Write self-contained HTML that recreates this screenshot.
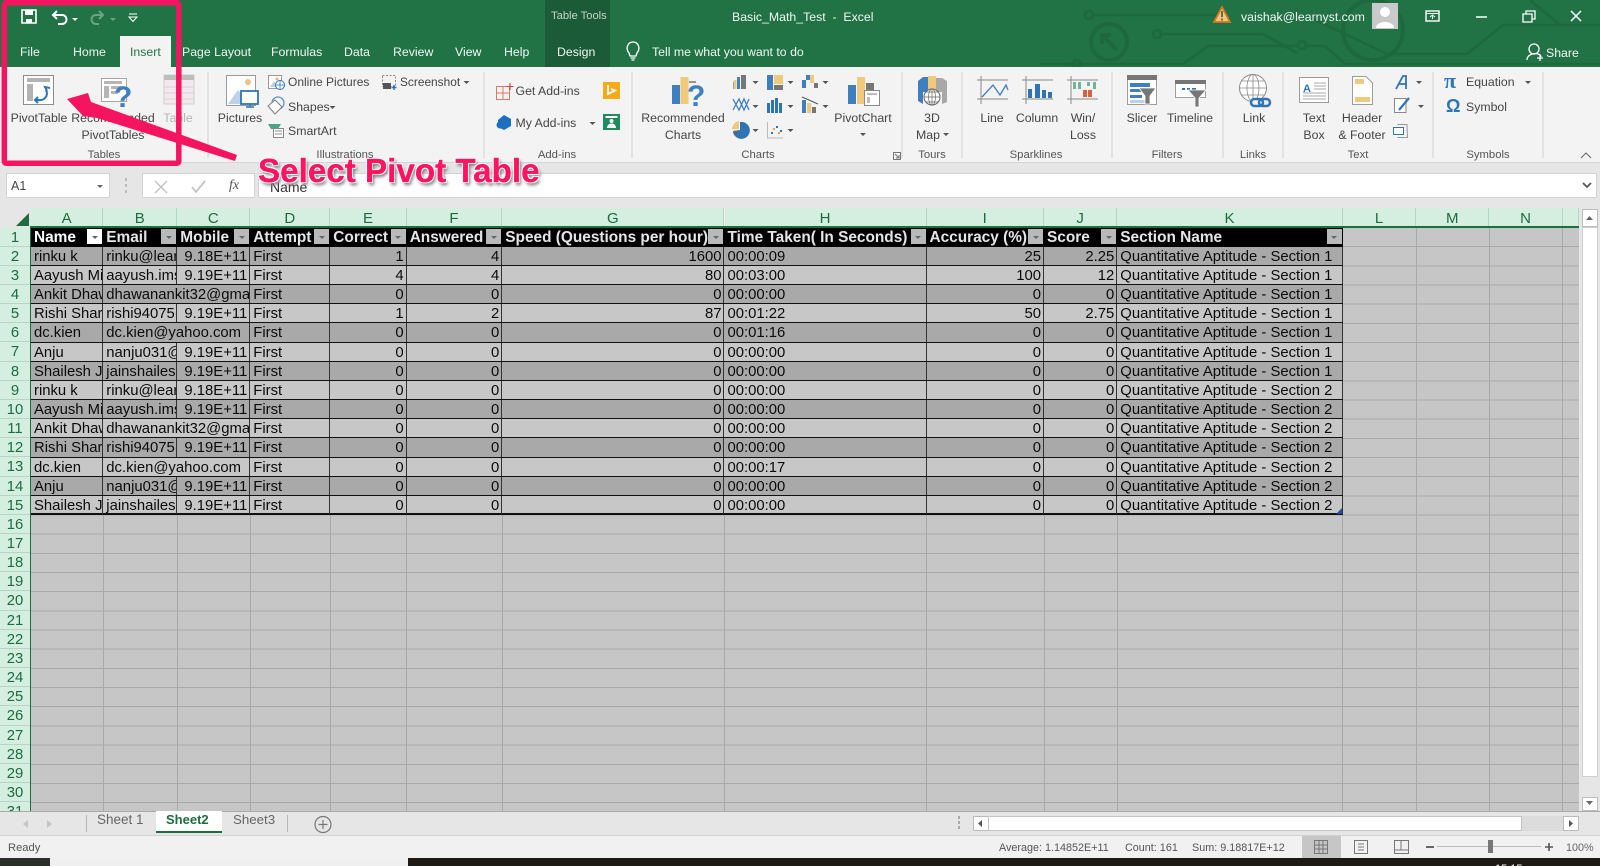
<!DOCTYPE html>
<html lang="en"><head><meta charset="utf-8"><title>Basic_Math_Test - Excel</title>
<style>
*{margin:0;padding:0;box-sizing:border-box}
html,body{width:1600px;height:866px;overflow:hidden;background:#f1f1f1}
body{position:relative;font-family:"Liberation Sans",Arial,sans-serif}
.b{position:absolute}
.t{position:absolute;white-space:nowrap;font-size:12.3px;line-height:16px;color:#444}
.c{transform:translateX(-50%)}
.w{color:#f2f7f4}
.g{color:#555}
.r{position:absolute;left:31px;width:1312px;height:19.17px;border-bottom:1px solid #111;font-size:14.85px;color:#0a0a0a}
.r i{position:absolute;top:0;height:18.17px;line-height:20.4px;font-style:normal;padding:0 2px 0 3px;overflow:hidden;white-space:nowrap;border-right:1px solid #333}
.d{background:#a9a9a9}.l{background:#c7c7c7}
.a{left:0;width:72.3px}.e2{left:72.3px;width:74px}.m{left:146.3px;width:73px;text-align:right}
.e3{left:72.3px;width:147px}.at{left:219.3px;width:80px}
.n1{left:299.3px;width:76.4px;text-align:right}.n2{left:375.7px;width:95.6px;text-align:right}
.n3{left:471.3px;width:222.2px;text-align:right}.ti{left:693.5px;width:202px}
.n4{left:895.5px;width:117.5px;text-align:right}.n5{left:1013px;width:73.3px;text-align:right}
.k{left:1086.3px;width:225.4px}
.h{background:#000;border-bottom:0}
.h i{color:#e6e6e6;font-weight:bold;font-size:15.4px;border-right:0;height:19px;line-height:20.4px}
.h u{position:absolute;right:1px;top:1.5px;width:15px;height:15px;background:#b9b9b9;display:block}
.h u:after{content:"";position:absolute;left:4.5px;top:6.5px;border:3px solid transparent;border-top:3px solid #666;border-bottom:0}
.col{position:absolute;top:208px;height:19px;line-height:21px;text-align:center;font-size:15px;color:#1c6c40;background:#d4efdf;border-right:1px solid #b4d6c2;overflow:hidden}
#rows{position:absolute;left:0;top:227.5px;width:30px;height:583.5px;overflow:hidden;background:#d4efdf}
#rows div{height:19.17px;line-height:21.4px;text-align:center;font-size:14.85px;color:#1c6c40;border-bottom:1px solid #b4d6c2}
</style></head><body>

<!-- title / tab band -->
<div class="b" style="left:0;top:0;width:1600px;height:67px;background:#217346"></div>
<div class="b" style="left:545px;top:0;width:65px;height:67px;background:#1b5b38"></div>
<svg class="b" style="left:0;top:0" width="1600" height="67" fill="none" stroke="#1d683e" stroke-width="2.6">
<circle cx="1089" cy="15" r="4"/><path d="M1093 15H1218"/>
<circle cx="1109" cy="42" r="18" stroke-width="4"/><path d="M1117 50L1102 35M1102 44V35H1111" stroke-width="4"/>
<circle cx="1157" cy="34" r="4"/><path d="M1161 34H1263L1297 53"/>
<path d="M1040 64H1183L1208 46H1298M1307 46H1325L1345 64H1600"/><circle cx="1302" cy="45" r="4"/>
<circle cx="1077" cy="64" r="4"/>
<circle cx="1373" cy="30" r="30" stroke-width="4"/>
<path d="M1305 15L1387 54H1467L1503 25H1600"/><path d="M1530 0L1560 25" />
</svg>

<!-- QAT -->
<svg class="b" style="left:0;top:0" width="160" height="34" fill="none">
<path d="M22 10H36V23H22Z" stroke="#fff" stroke-width="1.6"/><path d="M25 10H33V15H25Z" fill="#fff"/><path d="M26 19H32V23H26Z" fill="#fff"/>
<path d="M53 15H62C68 15 68 24 62 24H58M57 11L53 15L57 19" stroke="#fff" stroke-width="2"/><path d="M72 18h6l-3 3z" fill="#fff"/>
<path d="M103 15H96C90 15 90 24 96 24H99M99 11L103 15L99 19" stroke="#6da385" stroke-width="2"/><path d="M110 18h6l-3 3z" fill="#6da385"/>
<path d="M129 17h8l-4 4.500z" stroke="#fff" stroke-width="1"/><path d="M129 14H137" stroke="#fff"/>
</svg>

<!-- right controls -->
<svg class="b" style="left:1200px;top:0" width="400" height="67" fill="none">
<path d="M22 7L30 22H14Z" fill="#f4c77b" stroke="#d9751d" stroke-width="1.8"/><path d="M22 11V17M22 18.500V20.500" stroke="#444" stroke-width="1.500"/>
<rect x="172" y="3" width="26" height="26" fill="#c9c9c9"/><circle cx="185" cy="12" r="5" fill="#fff"/><path d="M176 28C176 20 194 20 194 28Z" fill="#fff"/>
<rect x="226" y="11" width="13" height="10" stroke="#fff" stroke-width="1.400"/><path d="M226 13.500H239M232.500 19V15M230 17L232.500 15L235 17" stroke="#fff"/>
<path d="M276 17H287" stroke="#fff" stroke-width="1.500"/>
<path d="M323 14H332V22H323ZM326 14V11H335V19H332" stroke="#fff" stroke-width="1.300"/>
<path d="M371 11L381 21M381 11L371 21" stroke="#fff" stroke-width="1.500"/>
<circle cx="334" cy="49" r="5" stroke="#fff" stroke-width="1.300"/><path d="M327 60C327 52 341 52 341 57M340 55V61M337 58H343" stroke="#fff" stroke-width="1.300"/>
</svg>
<div class="t w" style="left:551px;top:8px;font-size:11.2px;color:#c0d5c8">Table Tools</div>
<div class="t w" style="left:732px;top:9px">Basic_Math_Test &nbsp;-&nbsp; Excel</div>
<div class="t w" style="left:1241px;top:9px">vaishak@learnyst.com</div>
<div class="t w" style="left:20px;top:43.500px">File</div>
<div class="t w" style="left:73px;top:43.500px">Home</div>
<div class="b" style="left:120px;top:36px;width:51px;height:32px;background:#f3f3f3"></div>
<div class="t" style="left:130px;top:43.500px;color:#217346">Insert</div>
<div class="t w" style="left:182px;top:43.500px">Page Layout</div>
<div class="t w" style="left:271px;top:43.500px">Formulas</div>
<div class="t w" style="left:344px;top:43.500px">Data</div>
<div class="t w" style="left:393px;top:43.500px">Review</div>
<div class="t w" style="left:455px;top:43.500px">View</div>
<div class="t w" style="left:504px;top:43.500px">Help</div>
<div class="t w" style="left:557px;top:43.500px">Design</div>
<svg class="b" style="left:624px;top:40px" width="20" height="22" fill="none" stroke="#fff" stroke-width="1.300"><path d="M5 13C1 8 4 2 9 2C14 2 17 8 13 13L12 16H6Z"/><path d="M6.500 18H11.500M7.500 20H10.500"/></svg>
<div class="t w" style="left:652px;top:43.500px">Tell me what you want to do</div>
<div class="t w" style="left:1546px;top:45px">Share</div>

<!-- ribbon -->
<div class="b" style="left:0;top:67px;width:1600px;height:96px;background:#f3f3f3;border-bottom:1px solid #d6d6d6"></div>
<div class="b" style="left:120px;top:66px;width:51px;height:3px;background:#f3f3f3"></div>
<svg class="b" style="left:0;top:67px" width="1600" height="96" viewBox="0 67 1600 96" fill="none">
<path d="M208 72V158M484 72V158M632 72V158M902 72V158M962 72V158M1112 72V158M1223 72V158M1283 72V158M1433 72V158M1543 72V158" stroke="#d2d2d2"/>
<!-- PivotTable -->
<rect x="23.500" y="75.500" width="30" height="29" fill="#fff" stroke="#8d8d8d"/><path d="M27 78H50V82H27ZM27 84H33V101H27Z" fill="#b3b3b3"/>
<path d="M46 90C49 96 44 101 38 100M40 100H35M38 97L35 100L38 103M47 91L45 87L50 88" stroke="#2f75b5" stroke-width="2"/>
<!-- Recommended -->
<rect x="101.500" y="78.500" width="25" height="23" fill="#fff" stroke="#a5a5a5"/><path d="M104 81H122V84H104ZM104 86H109V98H104ZM111 86H122V89H111ZM111 91H118V94H111Z" fill="#b5b5b5"/>
<!-- Table -->
<path d="M164 75H194V104H164Z" fill="#f2e8ee" stroke="#cfcfcf"/><path d="M164 75H194V80H164Z" fill="#bdbdbd"/><path d="M179 75V104M164 87H194M164 93H194M164 99H194" stroke="#d9d0d5"/>
<!-- Pictures -->
<rect x="226.500" y="75.500" width="29" height="30" fill="#fff" stroke="#9a9a9a"/><circle cx="248" cy="82" r="3" fill="#f1c27d"/><path d="M228 104L238 90L246 100V104Z" fill="#bcd2e8"/>
<rect x="241" y="91" width="17" height="13" fill="#fff" stroke="#2f75b5" stroke-width="1.800"/><path d="M246 107H254M250 104V107" stroke="#2f75b5" stroke-width="1.400"/>
<!-- small illustration icons -->
<rect x="268.500" y="75.500" width="13" height="13" fill="#fff" stroke="#999"/><circle cx="277" cy="79" r="1.500" fill="#ecb566"/><path d="M270 87L274 81L278 87Z" fill="#bcd2e8"/><circle cx="280" cy="85" r="4.500" fill="#fff" stroke="#2f75b5"/><path d="M275.500 85H284.500M280 80.500V89.500" stroke="#2f75b5" stroke-width=".8"/>
<circle cx="278" cy="103" r="6" stroke="#5b93cc" stroke-width="1.300"/><path d="M268 106L275 100L282 107L275 114Z" fill="#fff" stroke="#7d7d7d"/>
<path d="M268 124H281L278 129H271Z" fill="#4ea287"/><rect x="273.500" y="128.500" width="10" height="9" fill="#fff" stroke="#888"/><path d="M275 131H282M275 134H282" stroke="#888"/>
<rect x="382.500" y="75.500" width="13" height="11" stroke="#888" stroke-dasharray="2 1.500"/><rect x="383" y="83" width="8" height="6" fill="#555"/><path d="M394 85V90M391.500 87.500H396.500" stroke="#2f75b5" stroke-width="1.500"/>
<path d="M329.500 106h6l-3 3zM463.500 81h6l-3 3zM589.500 122h6l-3 3z" fill="#555"/>
<!-- addins -->
<path d="M496.500 86.500H509.500V99.500H496.500ZM496.500 93H509.500M503 86.500V99.500" stroke="#d97a6c"/><path d="M510 83V90M506.500 86.500H513.500" stroke="#d6453a" stroke-width="1.100"/>
<path d="M504 115L511 119V126L504 130L498 127V120Z" fill="#1f6fc0"/><circle cx="500" cy="125" r="3.500" fill="#1f6fc0"/>
<rect x="603" y="82" width="17" height="17" fill="#f5ab17"/><path d="M608 85V94L615 90.500L611 89" stroke="#fff" stroke-width="1.800"/>
<rect x="603" y="114" width="17" height="16" fill="#1f8a5b"/><rect x="605.500" y="116" width="12" height="2" fill="#fff"/><circle cx="611.500" cy="121" r="2" fill="#fff"/><path d="M607 128C607 122 616 122 616 128Z" fill="#fff"/>
<!-- rec charts -->
<rect x="672" y="85" width="8" height="19" fill="#3f7fbf"/><rect x="680.500" y="77" width="8" height="27" fill="#f0c97a"/><path d="M689 82H696" stroke="#777" stroke-width="1.500"/>
<!-- chart grid -->
<path d="M733 82h3v7h-3zM737 77h3v12h-3z" fill="#3f7fbf"/><path d="M733.500 80h3v9h-3z" fill="#f0c97a"/><rect x="741" y="75" width="5" height="14" fill="#777"/>
<path d="M767 75H773V90H767Z" fill="#3f7fbf"/><path d="M774 75H783V84H774Z" fill="#f0c97a"/><path d="M774 85H783V90H774Z" fill="#777"/>
<path d="M802 80H806V88H802Z" fill="#3f7fbf"/><path d="M806 75H810V80H806Z" fill="#3f7fbf"/><path d="M810 75H814V83H810Z" fill="#f0c97a"/><path d="M814 83H818V88H814Z" fill="#777"/>
<path d="M733 99L739 110L744 99L749 110M733 110L739 99L744 110L749 99" stroke="#3f7fbf" stroke-width="1.300"/>
<path d="M767 103h3v10h-3zM771 100h3v13h-3zM775 98h3v15h-3zM779 103h3v10h-3z" fill="#2f75b5"/>
<path d="M802 100h4v13h-4z" fill="#3f7fbf"/><path d="M807 103h4v10h-4z" fill="#f0c97a"/><path d="M812 107h4v6h-4z" fill="#777"/><path d="M802 97L818 104" stroke="#555"/>
<path d="M740 122A8.500 8.500 0 1 1 733 132L740 130Z" fill="#2f75b5"/><path d="M732 129A8.500 8.500 0 0 1 739 121V129Z" fill="#f0c97a"/><path d="M733 131L740 130L734 135Z" fill="#666"/>
<path d="M767.500 122V138H783" stroke="#bbb"/><path d="M771 132h2v2h-2zM776 126h2v2h-2zM780 130h2v2h-2z" fill="#2f75b5"/><path d="M773 128h2v2h-2zM778 132h2v2h-2z" fill="#e0a840"/>
<path d="M752.500 81h6l-3 3zM787.500 81h6l-3 3zM822.500 81h6l-3 3zM752.500 105h6l-3 3zM787.500 105h6l-3 3zM822.500 105h6l-3 3zM752.500 129h6l-3 3zM787.500 129h6l-3 3zM860 133h6l-3 3zM943 133h6l-3 3z" fill="#555"/>
<!-- PivotChart -->
<rect x="848" y="85" width="8" height="19" fill="#3f7fbf"/><rect x="857" y="77" width="8" height="27" fill="#f0c97a"/><rect x="866" y="83" width="8" height="10" fill="#777"/><rect x="864.500" y="90.500" width="15" height="15" fill="#fff" stroke="#8a8a8a"/><path d="M867 93H877V95H867ZM867 97H870V103H867Z" fill="#bbb"/>
<!-- 3D Map -->
<path d="M918 81L923 77V104L918 101Z" fill="#3f7fbf"/><path d="M923 77H930V92H923V104Z" fill="#3f7fbf"/><path d="M928 76H936V92H928Z" fill="#f0c97a"/><path d="M936 78H942L947 81V102L942 104V92H936Z" fill="#a8a8a8"/>
<circle cx="932" cy="97" r="8" fill="#fff" stroke="#666"/><path d="M924 97H940M932 89V105M926 92H938M926 102H938" stroke="#666" stroke-width=".7"/><ellipse cx="932" cy="97" rx="3.500" ry="8" stroke="#666" stroke-width=".7"/>
<!-- Sparklines -->
<path d="M977 80H1008M977 99H1008M981 76V104M1022 80H1053M1022 99H1053M1026 76V104M1067 80H1098M1067 99H1098M1071 76V104" stroke="#8a8a8a"/>
<path d="M982 97L993 85L1000 95L1006 85L1008 90" stroke="#3f7fbf" stroke-width="1.300"/>
<path d="M1028 89h4v9h-4zM1035 84h5v14h-5zM1042 90h4v8h-4zM1048 92h4v6h-4z" fill="#2f75b5"/>
<path d="M1073 82h3v7h-3zM1078 82h3v7h-3zM1087 82h3v4h-3zM1093 82h3v7h-3z" fill="#74b39a"/><path d="M1083 90h4v7h-4zM1088 90h4v7h-4z" fill="#d9603c"/>
<!-- Slicer -->
<rect x="1127.500" y="75.500" width="29" height="29" fill="#fff" stroke="#9c9c9c"/><path d="M1127 75H1157V80H1127Z" fill="#777"/><path d="M1130 83H1150V87H1130ZM1130 89H1146V92H1130Z" fill="#3f7fbf"/><path d="M1130 95H1142V98H1130Z" fill="#3f7fbf"/><path d="M1130 100H1150V103H1130Z" fill="#bcd2e8"/><path d="M1139 88H1156L1150 96V104H1145V96Z" fill="#777" stroke="#fff" stroke-width=".8"/>
<!-- Timeline -->
<rect x="1175.500" y="80.500" width="30" height="17" fill="#fff" stroke="#9c9c9c"/><path d="M1175 80H1206V84H1175Z" fill="#777"/><path d="M1182 88h3v2h-3zM1187 88h3v2h-3zM1192 88h4v2h-4z" fill="#2f75b5"/><path d="M1188 90H1206L1199 98V107H1195V98Z" fill="#777" stroke="#fff" stroke-width=".8"/>
<!-- Link -->
<circle cx="1253" cy="88" r="13.500" fill="#fff" stroke="#8a8a8a"/><path d="M1239.500 88H1266.500M1253 74.500V101.500M1242 81H1264M1242 95H1264" stroke="#8a8a8a" stroke-width=".8"/><ellipse cx="1253" cy="88" rx="6" ry="13.500" stroke="#8a8a8a" stroke-width=".8"/>
<rect x="1251" y="99" width="12" height="7" rx="3.500" stroke="#2f75b5" stroke-width="2.500" fill="#f3f3f3"/><rect x="1259" y="99" width="11" height="7" rx="3.500" stroke="#2f75b5" stroke-width="2.500"/>
<!-- Text box -->
<rect x="1299.500" y="77.500" width="29" height="25" fill="#fff" stroke="#9c9c9c"/><path d="M1314 83H1326M1314 86H1326M1314 89H1326M1303 93H1326M1303 96H1326M1303 99H1326" stroke="#aaa"/>
<!-- Header -->
<path d="M1352.500 76.500H1366L1372.500 83V104.500H1352.500Z" fill="#fff" stroke="#9c9c9c"/><path d="M1355 79H1364V84H1355ZM1355 97H1370V102H1355Z" fill="#f0c97a"/>
<!-- text small -->
<path d="M1396 89L1403 76H1406L1406 89M1398 84H1407" stroke="#2f75b5" stroke-width="1.800"/><path d="M1416 81h6l-3 3z" fill="#555"/>
<path d="M1394.500 98.500H1406V112.500H1394.500Z" fill="#fff" stroke="#888"/><path d="M1399 110L1409 98" stroke="#2f75b5" stroke-width="2.200"/><path d="M1418 105h6l-3 3z" fill="#555"/>
<path d="M1397.500 124.500H1407L1407.500 137.500H1397.500" stroke="#999"/><rect x="1393.500" y="127.500" width="10" height="7" fill="#fff" stroke="#2f75b5"/>
<path d="M1525 81h6l-3 3z" fill="#555"/>
<path d="M1581 158L1586 153L1591 158" stroke="#666"/>
</svg>
<div class="t" style="left:114px;top:84.500px;font-size:30px;line-height:26px;font-weight:bold;color:#3f7fbf">?</div>
<div class="t" style="left:687px;top:83.500px;font-size:30px;line-height:26px;font-weight:bold;color:#3f7fbf">?</div>
<div class="t" style="left:1303px;top:81px;font-size:11px;font-weight:bold;color:#2f75b5">A</div>
<div class="t" style="left:1444px;top:70px;font-size:22px;line-height:22px;font-weight:bold;color:#2f75b5;font-family:'Liberation Serif',serif">π</div>
<div class="t" style="left:1446px;top:95px;font-size:18px;line-height:22px;font-weight:bold;color:#2f75b5">Ω</div>
<div class="t c" style="left:39px;top:109.500px">PivotTable</div>
<div class="t c" style="left:113px;top:109.500px">Recommended</div>
<div class="t c" style="left:113px;top:126.500px">PivotTables</div>
<div class="t c" style="left:178px;top:109.500px;color:#b5b5b5">Table</div>
<div class="t c" style="left:240px;top:109.500px">Pictures</div>
<div class="t" style="left:288px;top:74px;font-size:12px">Online Pictures</div>
<div class="t" style="left:288px;top:98.500px">Shapes</div>
<div class="t" style="left:288px;top:122.500px">SmartArt</div>
<div class="t" style="left:400px;top:74px;font-size:11.900px">Screenshot</div>
<div class="t" style="left:515.500px;top:82.500px">Get Add-ins</div>
<div class="t" style="left:515.500px;top:115px">My Add-ins</div>
<div class="t c" style="left:683px;top:109.500px">Recommended</div>
<div class="t c" style="left:683px;top:126.500px">Charts</div>
<div class="t c" style="left:863px;top:109.500px">PivotChart</div>
<div class="t c" style="left:932px;top:109.500px">3D</div>
<div class="t c" style="left:928px;top:126.500px">Map</div>
<div class="t c" style="left:992px;top:109.500px">Line</div>
<div class="t c" style="left:1037px;top:109.500px">Column</div>
<div class="t c" style="left:1083px;top:109.500px">Win/</div>
<div class="t c" style="left:1083px;top:126.500px">Loss</div>
<div class="t c" style="left:1142px;top:109.500px">Slicer</div>
<div class="t c" style="left:1190px;top:109.500px">Timeline</div>
<div class="t c" style="left:1254px;top:109.500px">Link</div>
<div class="t c" style="left:1314px;top:109.500px">Text</div>
<div class="t c" style="left:1314px;top:126.500px">Box</div>
<div class="t c" style="left:1362px;top:109.500px">Header</div>
<div class="t c" style="left:1362px;top:126.500px">&amp; Footer</div>
<div class="t" style="left:1466px;top:74px">Equation</div>
<div class="t" style="left:1466px;top:98.500px">Symbol</div>
<div class="t c g" style="left:104px;top:146.500px;font-size:11.300px">Tables</div>
<div class="t c g" style="left:345px;top:146.500px;font-size:11.300px">Illustrations</div>
<div class="t c g" style="left:557px;top:146.500px;font-size:11.300px">Add-ins</div>
<div class="t c g" style="left:758px;top:146.500px;font-size:11.300px">Charts</div>
<div class="t c g" style="left:932px;top:146.500px;font-size:11.300px">Tours</div>
<div class="t c g" style="left:1036px;top:146.500px;font-size:11.300px">Sparklines</div>
<div class="t c g" style="left:1167px;top:146.500px;font-size:11.300px">Filters</div>
<div class="t c g" style="left:1253px;top:146.500px;font-size:11.300px">Links</div>
<div class="t c g" style="left:1358px;top:146.500px;font-size:11.300px">Text</div>
<div class="t c g" style="left:1488px;top:146.500px;font-size:11.300px">Symbols</div>
<svg class="b" style="left:892px;top:151px" width="10" height="10" fill="none" stroke="#777"><path d="M1 1.500H8.500V8.500H1.500V1M3 3L7 7M7 4V7H4"/></svg>

<!-- formula band -->
<div class="b" style="left:0;top:163px;width:1600px;height:45px;background:#e6e6e6"></div>
<div class="b" style="left:6px;top:173px;width:104px;height:25px;background:#fff;border:1px solid #d4d4d4"></div>
<div class="t" style="left:11px;top:178px;font-size:12.500px">A1</div>
<div class="b" style="left:142px;top:173px;width:113px;height:25px;background:#fff;border:1px solid #d4d4d4"></div>
<div class="b" style="left:258px;top:173px;width:1339px;height:25px;background:#fff;border:1px solid #d4d4d4"></div>
<svg class="b" style="left:0;top:170px" width="260" height="30" fill="none">
<path d="M97 15h6l-3 3z" fill="#666"/><path d="M126 8v3M126 14v3M126 20v3" stroke="#bbb" stroke-width="2"/>
<path d="M155 11L167 23M167 11L155 23" stroke="#c4c4c4" stroke-width="1.500"/><path d="M192 17L196 22L205 11" stroke="#c4c4c4" stroke-width="1.800"/>
</svg>
<div class="t" style="left:229px;top:178px;font-family:'Liberation Serif',serif;font-style:italic;font-size:14px;color:#555">fx</div>
<div class="t" style="left:270px;top:179px;font-size:14px;color:#333">Name</div>
<svg class="b" style="left:1580px;top:178px" width="14" height="14" fill="none"><path d="M3 5L7 9L11 5" stroke="#555" stroke-width="1.800"/></svg>

<!-- column headings -->
<div class="b" style="left:0;top:208px;width:31px;height:20px;background:#e6e6e6"></div>
<svg class="b" style="left:15px;top:213px" width="14" height="14"><path d="M14 0V13H1Z" fill="#1c6c40"/></svg>
<div class="col" style="left:31px;width:72.300px">A</div>
<div class="col" style="left:103.300px;width:74px">B</div>
<div class="col" style="left:177.300px;width:73px">C</div>
<div class="col" style="left:250.300px;width:80px">D</div>
<div class="col" style="left:330.300px;width:76.400px">E</div>
<div class="col" style="left:406.700px;width:95.600px">F</div>
<div class="col" style="left:502.300px;width:222.200px">G</div>
<div class="col" style="left:724.500px;width:202px">H</div>
<div class="col" style="left:926.500px;width:117.500px">I</div>
<div class="col" style="left:1044px;width:73.300px">J</div>
<div class="col" style="left:1117.300px;width:225.400px">K</div>
<div class="col" style="left:1342.700px;width:73.600px">L</div>
<div class="col" style="left:1416.300px;width:73px">M</div>
<div class="col" style="left:1489.300px;width:73.400px">N</div>
<div class="col" style="left:1562.700px;width:16px"></div>
<div class="b" style="left:30px;top:226px;width:1549px;height:2px;background:#1a6f3f"></div>

<!-- grid -->
<div class="b" style="left:31px;top:227.500px;width:1548px;height:583.500px;background:repeating-linear-gradient(to bottom,#c6c6c6 0,#c6c6c6 18.170px,#a9a9a9 18.170px,#a9a9a9 19.170px)"></div>
<svg class="b" style="left:0;top:228px" width="1580" height="583" stroke="#a9a9a9"><path d="M103.500 0V583M177.500 0V583M250.500 0V583M330.500 0V583M406.500 0V583M502.500 0V583M724.500 0V583M926.500 0V583M1044.500 0V583M1117.500 0V583M1342.500 0V583M1416.500 0V583M1489.500 0V583M1562.500 0V583"/></svg>

<div id="rows"><div>1</div><div>2</div><div>3</div><div>4</div><div>5</div><div>6</div><div>7</div><div>8</div><div>9</div><div>10</div><div>11</div><div>12</div><div>13</div><div>14</div><div>15</div><div>16</div><div>17</div><div>18</div><div>19</div><div>20</div><div>21</div><div>22</div><div>23</div><div>24</div><div>25</div><div>26</div><div>27</div><div>28</div><div>29</div><div>30</div><div>31</div></div>
<div class="b" style="left:29.500px;top:227px;width:1.500px;height:584px;background:#1a6f3f"></div>

<div class="r h" style="top:227.500px">
<i class="a" style="color:#fff">Name<u style="background:#fff"></u></i><i class="e2">Email<u></u></i><i class="m" style="text-align:left">Mobile<u></u></i><i class="at">Attempt<u></u></i><i class="n1" style="text-align:left">Correct<u></u></i><i class="n2" style="text-align:left">Answered<u></u></i><i class="n3" style="text-align:left">Speed (Questions per hour)<u></u></i><i class="ti">Time Taken( In Seconds)<u></u></i><i class="n4" style="text-align:left">Accuracy (%)<u></u></i><i class="n5" style="text-align:left">Score<u></u></i><i class="k">Section Name<u></u></i>
</div>
<div class="r d" style="top:246.670px"><i class="a">rinku k</i><i class="e2">rinku@learnyst</i><i class="m">9.18E+11</i><i class="at">First</i><i class="n1">1</i><i class="n2">4</i><i class="n3">1600</i><i class="ti">00:00:09</i><i class="n4">25</i><i class="n5">2.25</i><i class="k">Quantitative Aptitude - Section 1</i></div>
<div class="r l" style="top:265.840px"><i class="a">Aayush Mishra</i><i class="e2">aayush.ims@gmail</i><i class="m">9.19E+11</i><i class="at">First</i><i class="n1">4</i><i class="n2">4</i><i class="n3">80</i><i class="ti">00:03:00</i><i class="n4">100</i><i class="n5">12</i><i class="k">Quantitative Aptitude - Section 1</i></div>
<div class="r d" style="top:285.010px"><i class="a">Ankit Dhawan</i><i class="e3">dhawanankit32@gmail.com</i><i class="at">First</i><i class="n1">0</i><i class="n2">0</i><i class="n3">0</i><i class="ti">00:00:00</i><i class="n4">0</i><i class="n5">0</i><i class="k">Quantitative Aptitude - Section 1</i></div>
<div class="r l" style="top:304.180px"><i class="a">Rishi Sharma</i><i class="e2">rishi94075@gmail</i><i class="m">9.19E+11</i><i class="at">First</i><i class="n1">1</i><i class="n2">2</i><i class="n3">87</i><i class="ti">00:01:22</i><i class="n4">50</i><i class="n5">2.75</i><i class="k">Quantitative Aptitude - Section 1</i></div>
<div class="r d" style="top:323.350px"><i class="a">dc.kien</i><i class="e3">dc.kien@yahoo.com</i><i class="at">First</i><i class="n1">0</i><i class="n2">0</i><i class="n3">0</i><i class="ti">00:01:16</i><i class="n4">0</i><i class="n5">0</i><i class="k">Quantitative Aptitude - Section 1</i></div>
<div class="r l" style="top:342.520px"><i class="a">Anju</i><i class="e2">nanju031@gmail</i><i class="m">9.19E+11</i><i class="at">First</i><i class="n1">0</i><i class="n2">0</i><i class="n3">0</i><i class="ti">00:00:00</i><i class="n4">0</i><i class="n5">0</i><i class="k">Quantitative Aptitude - Section 1</i></div>
<div class="r d" style="top:361.690px"><i class="a">Shailesh Jain</i><i class="e2">jainshailesh@gmail</i><i class="m">9.19E+11</i><i class="at">First</i><i class="n1">0</i><i class="n2">0</i><i class="n3">0</i><i class="ti">00:00:00</i><i class="n4">0</i><i class="n5">0</i><i class="k">Quantitative Aptitude - Section 1</i></div>
<div class="r l" style="top:380.860px"><i class="a">rinku k</i><i class="e2">rinku@learnyst</i><i class="m">9.18E+11</i><i class="at">First</i><i class="n1">0</i><i class="n2">0</i><i class="n3">0</i><i class="ti">00:00:00</i><i class="n4">0</i><i class="n5">0</i><i class="k">Quantitative Aptitude - Section 2</i></div>
<div class="r d" style="top:400.030px"><i class="a">Aayush Mishra</i><i class="e2">aayush.ims@gmail</i><i class="m">9.19E+11</i><i class="at">First</i><i class="n1">0</i><i class="n2">0</i><i class="n3">0</i><i class="ti">00:00:00</i><i class="n4">0</i><i class="n5">0</i><i class="k">Quantitative Aptitude - Section 2</i></div>
<div class="r l" style="top:419.200px"><i class="a">Ankit Dhawan</i><i class="e3">dhawanankit32@gmail.com</i><i class="at">First</i><i class="n1">0</i><i class="n2">0</i><i class="n3">0</i><i class="ti">00:00:00</i><i class="n4">0</i><i class="n5">0</i><i class="k">Quantitative Aptitude - Section 2</i></div>
<div class="r d" style="top:438.370px"><i class="a">Rishi Sharma</i><i class="e2">rishi94075@gmail</i><i class="m">9.19E+11</i><i class="at">First</i><i class="n1">0</i><i class="n2">0</i><i class="n3">0</i><i class="ti">00:00:00</i><i class="n4">0</i><i class="n5">0</i><i class="k">Quantitative Aptitude - Section 2</i></div>
<div class="r l" style="top:457.540px"><i class="a">dc.kien</i><i class="e3">dc.kien@yahoo.com</i><i class="at">First</i><i class="n1">0</i><i class="n2">0</i><i class="n3">0</i><i class="ti">00:00:17</i><i class="n4">0</i><i class="n5">0</i><i class="k">Quantitative Aptitude - Section 2</i></div>
<div class="r d" style="top:476.710px"><i class="a">Anju</i><i class="e2">nanju031@gmail</i><i class="m">9.19E+11</i><i class="at">First</i><i class="n1">0</i><i class="n2">0</i><i class="n3">0</i><i class="ti">00:00:00</i><i class="n4">0</i><i class="n5">0</i><i class="k">Quantitative Aptitude - Section 2</i></div>
<div class="r l" style="top:495.880px;border-bottom:2px solid #111"><i class="a">Shailesh Jain</i><i class="e2">jainshailesh@gmail</i><i class="m">9.19E+11</i><i class="at">First</i><i class="n1">0</i><i class="n2">0</i><i class="n3">0</i><i class="ti">00:00:00</i><i class="n4">0</i><i class="n5">0</i><i class="k">Quantitative Aptitude - Section 2</i></div>
<svg class="b" style="left:1336px;top:508px" width="6" height="6"><path d="M6 0V6H0Z" fill="#1f4fa8"/></svg>

<!-- vertical scrollbar -->
<div class="b" style="left:1579px;top:208px;width:21px;height:603px;background:#e6e6e6"></div>
<div class="b" style="left:1581.500px;top:209px;width:16px;height:18px;background:#fff;border:1px solid #bdbdbd"></div>
<div class="b" style="left:1581.500px;top:227px;width:16px;height:550px;background:#fff;border:1px solid #cfcfcf"></div>
<div class="b" style="left:1581.500px;top:797px;width:16px;height:14px;background:#fff;border:1px solid #bdbdbd"></div>
<svg class="b" style="left:1581px;top:209px" width="17" height="602"><path d="M5 11h7l-3.500-4zM5 592h7l-3.500 4z" fill="#666"/></svg>

<!-- sheet tabs -->
<div class="b" style="left:0;top:811px;width:1600px;height:25px;background:#e6e6e6;border-top:1px solid #aaa;border-bottom:1px solid #d2d2d2"></div>
<svg class="b" style="left:0;top:811px" width="340" height="25" fill="none">
<path d="M28 9V17L23 13ZM47 9V17L52 13Z" fill="#c4c4c4"/><path d="M86.500 4V21M287.500 4V21" stroke="#b5b5b5"/>
<circle cx="323" cy="13.500" r="8" stroke="#777" stroke-width="1.200"/><path d="M323 9V18M318.500 13.500H327.500" stroke="#777" stroke-width="1.200"/>
</svg>
<div class="t" style="left:97px;top:812px;font-size:13.500px;color:#666">Sheet 1</div>
<div class="b" style="left:156px;top:811px;width:66px;height:22px;background:#fff;border-bottom:2px solid #1c6c40"></div>
<div class="t" style="left:166px;top:812px;font-size:13px;font-weight:bold;color:#1c6c40">Sheet2</div>
<div class="t" style="left:233px;top:812px;font-size:13.300px;color:#666">Sheet3</div>
<svg class="b" style="left:955px;top:815px" width="8" height="16"><path d="M4 1v3M4 6v3M4 11v3" stroke="#aaa" stroke-width="2"/></svg>
<div class="b" style="left:973px;top:816px;width:606px;height:15px;background:#dcdcdc"></div>
<div class="b" style="left:973px;top:816px;width:16px;height:15px;background:#fff;border:1px solid #bbb"></div>
<div class="b" style="left:988px;top:816px;width:534px;height:15px;background:#fff;border:1px solid #c4c4c4"></div>
<div class="b" style="left:1563px;top:816px;width:16px;height:15px;background:#fff;border:1px solid #bbb"></div>
<svg class="b" style="left:973px;top:816px" width="606" height="15"><path d="M9 4V11L5 7.500ZM596 4V11L600 7.500Z" fill="#555"/></svg>

<!-- status -->
<div class="b" style="left:0;top:836px;width:1600px;height:22px;background:#f1f1f1"></div>
<div class="t" style="left:8px;top:839.500px;font-size:11.200px;color:#555">Ready</div>
<div class="t" style="left:999px;top:839.500px;font-size:10.800px;color:#555">Average: 1.14852E+11</div>
<div class="t" style="left:1125px;top:839.500px;font-size:10.800px;color:#555">Count: 161</div>
<div class="t" style="left:1192px;top:839.500px;font-size:10.800px;color:#555">Sum: 9.18817E+12</div>
<div class="b" style="left:1302px;top:836px;width:39px;height:22px;background:#c6c6c6"></div>
<svg class="b" style="left:1300px;top:836px" width="300" height="22" fill="none" stroke="#777">
<path d="M14.500 4.500H27.500V17.500H14.500ZM14.500 9H27.500M14.500 13H27.500M19 4.500V17.500M23 4.500V17.500"/>
<path d="M54.500 4.500H67.500V17.500H54.500ZM58 8H64M58 11H64M58 14H64"/>
<path d="M94.500 4.500H108.500V17.500H94.500ZM94.500 14H108.500M101 4.500V14"/>
<path d="M126 11H134" stroke="#666" stroke-width="2"/><path d="M137 10.500H241" stroke="#bbb"/>
<rect x="188" y="4" width="5" height="13" fill="#777" stroke="none"/><path d="M245 11H253M249 7V15" stroke="#555" stroke-width="1.600"/>
</svg>
<div class="t" style="left:1566px;top:839.500px;font-size:10.800px;color:#666">100%</div>

<!-- bottom strip -->
<div class="b" style="left:0;top:858px;width:1600px;height:8px;background:#1d1a15;overflow:hidden">
<div class="b" style="left:0;top:0;width:50px;height:8px;background:#2b2f29"></div>
<div class="b" style="left:50px;top:0;width:358px;height:8px;background:#f0f0f0"></div>
<div class="t" style="left:1495px;top:3px;font-size:11px;color:#fff">15:15</div>
</div>

<!-- annotation -->
<svg class="b" style="left:0;top:0" width="260" height="170" fill="none">
<rect x="4.300" y="2.800" width="174.500" height="160.500" rx="2" stroke="#f5145f" stroke-width="5.500"/>
<path d="M67 99L88 93L91 102L237 155L235 161L97 118L83 116Z" fill="#f5145f"/>
</svg>
<div class="t" style="left:258px;top:153px;font-size:33.200px;line-height:38px;font-weight:bold;color:#ff1462;-webkit-text-stroke:.4px #ff1462;text-shadow:1px 1px 0 #fff,-1px -1px 0 #fff,1px -1px 0 #fff,-1px 1px 0 #fff,2px 3px 3px #777">Select Pivot Table</div>
</body></html>
